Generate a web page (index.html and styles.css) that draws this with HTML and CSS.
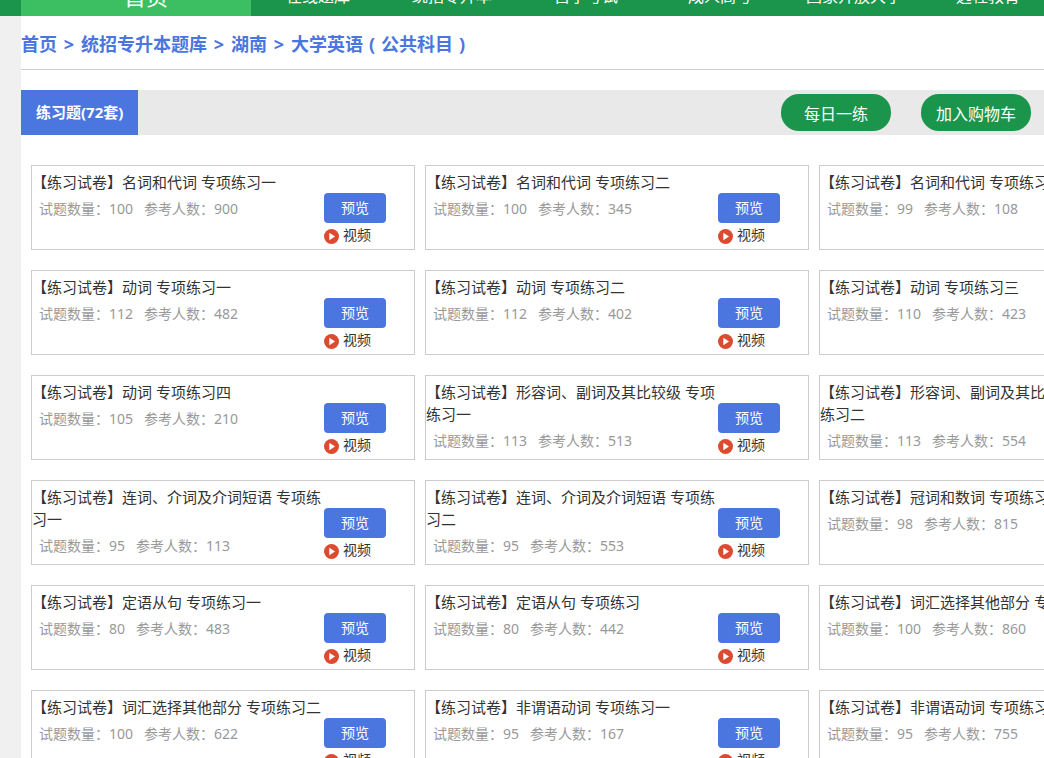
FILE: index.html
```html
<!DOCTYPE html>
<html lang="zh-CN">
<head>
<meta charset="utf-8">
<title>大学英语（公共科目）</title>
<link rel="stylesheet" href="styles.css">
</head>
<body>
<svg class="defs" aria-hidden="true">
  <symbol id="play" viewBox="0 0 15 15">
    <circle cx="7.5" cy="7.5" r="7.5" fill="#dc4a30"/>
    <path d="M5.6 4.3 L10.6 7.5 L5.6 10.7 Z" fill="#fff" stroke="#fff" stroke-width="0.6" stroke-linejoin="round"/>
  </symbol>
</svg>
<header class="header">
  <nav class="nav">
    <a class="nav-home" href="#">首页</a>
    <a class="nav-item" href="#">在线题库</a>
    <a class="nav-item" href="#">统招专升本</a>
    <a class="nav-item" href="#">自学考试</a>
    <a class="nav-item" href="#">成人高考</a>
    <a class="nav-item" href="#">国家开放大学</a>
    <a class="nav-item" href="#">远程教育</a>
  </nav>
</header>
<main class="page">
  <div class="crumbs">
    <a href="#">首页</a><span class="sep">&gt;</span><a href="#">统招专升本题库</a><span class="sep">&gt;</span><a href="#">湖南</a><span class="sep">&gt;</span><a href="#">大学英语<span class="paren">(</span>公共科目<span class="paren">)</span></a>
  </div>
  <div class="bar">
    <button class="tab" type="button">练习题(72套)</button>
    <div class="actions">
      <button class="pill" type="button">每日一练</button>
      <button class="pill" type="button">加入购物车</button>
    </div>
  </div>
  <section class="grid">
    <article class="card">
      <div class="info"><a class="title" href="#">【练习试卷】名词和代词 专项练习一</a><p class="meta">试题数量：100&nbsp;&nbsp; 参考人数：900</p></div>
      <div class="side"><button class="preview" type="button">预览</button><a class="video" href="#"><svg class="play"><use href="#play"/></svg>视频</a></div>
    </article>
    <article class="card">
      <div class="info"><a class="title" href="#">【练习试卷】名词和代词 专项练习二</a><p class="meta">试题数量：100&nbsp;&nbsp; 参考人数：345</p></div>
      <div class="side"><button class="preview" type="button">预览</button><a class="video" href="#"><svg class="play"><use href="#play"/></svg>视频</a></div>
    </article>
    <article class="card">
      <div class="info"><a class="title" href="#">【练习试卷】名词和代词 专项练习三</a><p class="meta">试题数量：99&nbsp;&nbsp; 参考人数：108</p></div>
      <div class="side"><button class="preview" type="button">预览</button><a class="video" href="#"><svg class="play"><use href="#play"/></svg>视频</a></div>
    </article>
    <article class="card">
      <div class="info"><a class="title" href="#">【练习试卷】动词 专项练习一</a><p class="meta">试题数量：112&nbsp;&nbsp; 参考人数：482</p></div>
      <div class="side"><button class="preview" type="button">预览</button><a class="video" href="#"><svg class="play"><use href="#play"/></svg>视频</a></div>
    </article>
    <article class="card">
      <div class="info"><a class="title" href="#">【练习试卷】动词 专项练习二</a><p class="meta">试题数量：112&nbsp;&nbsp; 参考人数：402</p></div>
      <div class="side"><button class="preview" type="button">预览</button><a class="video" href="#"><svg class="play"><use href="#play"/></svg>视频</a></div>
    </article>
    <article class="card">
      <div class="info"><a class="title" href="#">【练习试卷】动词 专项练习三</a><p class="meta">试题数量：110&nbsp;&nbsp; 参考人数：423</p></div>
      <div class="side"><button class="preview" type="button">预览</button><a class="video" href="#"><svg class="play"><use href="#play"/></svg>视频</a></div>
    </article>
    <article class="card">
      <div class="info"><a class="title" href="#">【练习试卷】动词 专项练习四</a><p class="meta">试题数量：105&nbsp;&nbsp; 参考人数：210</p></div>
      <div class="side"><button class="preview" type="button">预览</button><a class="video" href="#"><svg class="play"><use href="#play"/></svg>视频</a></div>
    </article>
    <article class="card">
      <div class="info"><a class="title" href="#">【练习试卷】形容词、副词及其比较级 专项练习一</a><p class="meta">试题数量：113&nbsp;&nbsp; 参考人数：513</p></div>
      <div class="side"><button class="preview" type="button">预览</button><a class="video" href="#"><svg class="play"><use href="#play"/></svg>视频</a></div>
    </article>
    <article class="card">
      <div class="info"><a class="title" href="#">【练习试卷】形容词、副词及其比较级 专项练习二</a><p class="meta">试题数量：113&nbsp;&nbsp; 参考人数：554</p></div>
      <div class="side"><button class="preview" type="button">预览</button><a class="video" href="#"><svg class="play"><use href="#play"/></svg>视频</a></div>
    </article>
    <article class="card">
      <div class="info"><a class="title" href="#">【练习试卷】连词、介词及介词短语 专项练习一</a><p class="meta">试题数量：95&nbsp;&nbsp; 参考人数：113</p></div>
      <div class="side"><button class="preview" type="button">预览</button><a class="video" href="#"><svg class="play"><use href="#play"/></svg>视频</a></div>
    </article>
    <article class="card">
      <div class="info"><a class="title" href="#">【练习试卷】连词、介词及介词短语 专项练习二</a><p class="meta">试题数量：95&nbsp;&nbsp; 参考人数：553</p></div>
      <div class="side"><button class="preview" type="button">预览</button><a class="video" href="#"><svg class="play"><use href="#play"/></svg>视频</a></div>
    </article>
    <article class="card">
      <div class="info"><a class="title" href="#">【练习试卷】冠词和数词 专项练习</a><p class="meta">试题数量：98&nbsp;&nbsp; 参考人数：815</p></div>
      <div class="side"><button class="preview" type="button">预览</button><a class="video" href="#"><svg class="play"><use href="#play"/></svg>视频</a></div>
    </article>
    <article class="card">
      <div class="info"><a class="title" href="#">【练习试卷】定语从句 专项练习一</a><p class="meta">试题数量：80&nbsp;&nbsp; 参考人数：483</p></div>
      <div class="side"><button class="preview" type="button">预览</button><a class="video" href="#"><svg class="play"><use href="#play"/></svg>视频</a></div>
    </article>
    <article class="card">
      <div class="info"><a class="title" href="#">【练习试卷】定语从句 专项练习</a><p class="meta">试题数量：80&nbsp;&nbsp; 参考人数：442</p></div>
      <div class="side"><button class="preview" type="button">预览</button><a class="video" href="#"><svg class="play"><use href="#play"/></svg>视频</a></div>
    </article>
    <article class="card">
      <div class="info"><a class="title" href="#">【练习试卷】词汇选择其他部分 专项练习一</a><p class="meta">试题数量：100&nbsp;&nbsp; 参考人数：860</p></div>
      <div class="side"><button class="preview" type="button">预览</button><a class="video" href="#"><svg class="play"><use href="#play"/></svg>视频</a></div>
    </article>
    <article class="card">
      <div class="info"><a class="title" href="#">【练习试卷】词汇选择其他部分 专项练习二</a><p class="meta">试题数量：100&nbsp;&nbsp; 参考人数：622</p></div>
      <div class="side"><button class="preview" type="button">预览</button><a class="video" href="#"><svg class="play"><use href="#play"/></svg>视频</a></div>
    </article>
    <article class="card">
      <div class="info"><a class="title" href="#">【练习试卷】非谓语动词 专项练习一</a><p class="meta">试题数量：95&nbsp;&nbsp; 参考人数：167</p></div>
      <div class="side"><button class="preview" type="button">预览</button><a class="video" href="#"><svg class="play"><use href="#play"/></svg>视频</a></div>
    </article>
    <article class="card">
      <div class="info"><a class="title" href="#">【练习试卷】非谓语动词 专项练习二</a><p class="meta">试题数量：95&nbsp;&nbsp; 参考人数：755</p></div>
      <div class="side"><button class="preview" type="button">预览</button><a class="video" href="#"><svg class="play"><use href="#play"/></svg>视频</a></div>
    </article>
  </section>
</main>
</body>
</html>
```
FILE: styles.css
```css
* {
  box-sizing: border-box;
}

body {
  margin: 0;
  height: 100vh;
  overflow: hidden;
  background: #f0f0f0;
  color: #333;
  font-family: "Noto Sans", "Noto Sans CJK SC", sans-serif;
  font-size: 14px;
}

a {
  color: inherit;
  text-decoration: none;
}

button {
  border: 0;
  padding: 0;
  font-family: inherit;
  color: #fff;
}

.defs {
  display: none;
}

/* Only the lower edge of the navigation shows */
.header {
  display: flex;
  align-items: flex-end;
  height: 16px;
  padding-left: 21px;
  overflow: hidden;
  background: #1b954b;
}

.nav {
  display: flex;
  flex: none;
  line-height: 40px;
  color: #fff;
  font-size: 16px;
  text-align: center;
}

.nav-home {
  width: 230px;
  padding-left: 20px;
  background: #3bbf62;
  font-size: 22px;
}

.nav-item {
  width: 134px;
}

.page {
  margin-left: 21px;
  overflow: hidden;
  background: #fff;
}

.crumbs {
  display: flex;
  height: 54px;
  border-bottom: 1px solid #ccc;
  color: #4b76e0;
  font-size: 18px;
  font-weight: 700;
  line-height: 56px;
  white-space: nowrap;
}

.sep {
  width: 24px;
  text-align: center;
}

.paren {
  display: inline-block;
  width: 18px;
  text-align: center;
}

.bar {
  display: flex;
  justify-content: space-between;
  margin-top: 20px;
  padding-right: 13px;
  background: #e9e9e9;
}

.tab {
  height: 45px;
  padding: 0 15px 2px;
  background: #4b76e0;
  font-size: 15px;
  font-weight: 700;
}

.actions {
  display: flex;
  align-items: center;
  gap: 30px;
}

.pill {
  width: 110px;
  height: 37px;
  border-radius: 18px;
  background: #1b954b;
  font-size: 16px;
}

.grid {
  display: grid;
  grid-template-columns: repeat(3, 384px);
  gap: 20px 10px;
  padding: 30px 10px;
}

.card {
  display: flex;
  min-height: 85px;
  border: 1px solid #ccc;
}

.info {
  width: 292px;
  padding-top: 5px;
  line-height: 22px;
}

.title {
  display: block;
  font-size: 15px;
}

.meta {
  margin: 5px 0 0;
  padding-left: 7px;
  color: #999;
}

.side {
  padding-top: 27px;
}

.preview {
  display: block;
  width: 62px;
  height: 30px;
  padding-bottom: 2px;
  border-radius: 4px;
  background: #4b76e0;
  font-size: 14px;
}

.video {
  display: flex;
  align-items: flex-end;
  gap: 4px;
  margin-top: 1px;
  line-height: 22px;
}

.play {
  width: 15px;
  height: 15px;
  margin-bottom: 2px;
}
```
